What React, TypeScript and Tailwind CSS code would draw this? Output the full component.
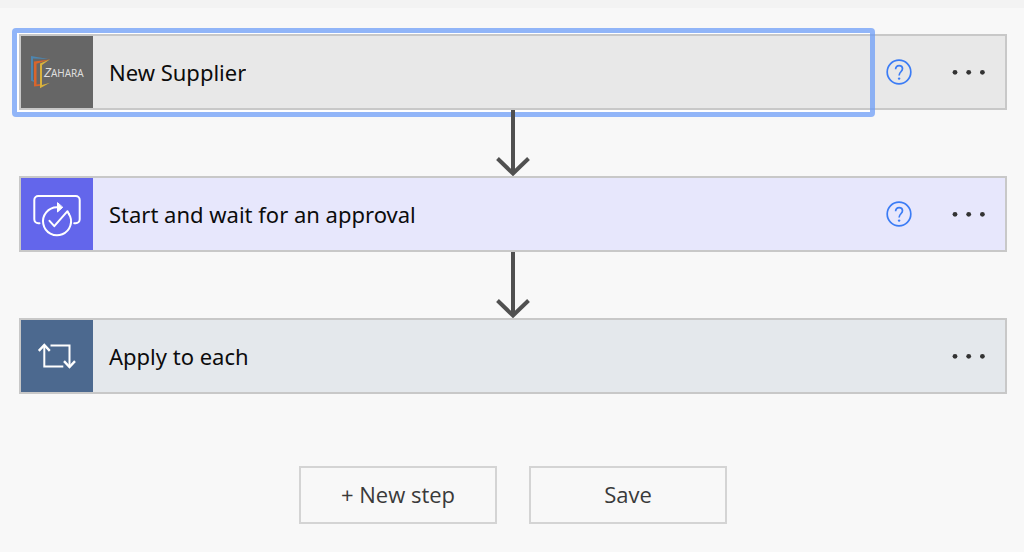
import type { ReactNode } from 'react'
import clsx from 'clsx'

type Step = {
  title: string
  icon: ReactNode
  card: string
  tile: string
  help?: boolean
  selected?: boolean
}

function ZaharaLogo() {
  return (
    <svg viewBox="0 0 72 72" className="w-full" fill="none" role="img" aria-label="Zahara">
      <path d="M10 20 27.5 23 12 22.5V44l2 .8v1.4l-4-1.4z" fill="#4d86b0" />
      <path d="m13 25.5 16-2-13.5 4.3V48.5l4-.5v1.8l-6.5.7z" fill="#d9652c" />
      <path d="m19 27.5 10-4.3-8 5.7v20l8-2.2-10 5.5z" fill="#d9b23c" />
      <text x="23" y="41" fill="#dedede" className="font-['Noto_Sans',sans-serif]">
        <tspan className="text-[13px] italic">Z</tspan>
        <tspan className="text-[10px]">AHARA</tspan>
      </text>
    </svg>
  )
}

function ApprovalIcon() {
  return (
    <svg viewBox="0 0 72 72" className="w-full" fill="none" stroke="#fff" strokeWidth="2" strokeLinecap="round" strokeLinejoin="round" aria-hidden="true">
      <path d="M18.5 45.3h-1.2a4 4 0 0 1-4-4V22a4 4 0 0 1 4-4h37.4a4 4 0 0 1 4 4v19.3a4 4 0 0 1-4 4h-1.5" />
      <path d="M36 29.3a14 14 0 1 0 11.8 6.4" />
      <path d="m28.5 42.8 4.8 5.4 13.2-15 1.5 3" />
      <path d="M36.5 25v9l5-4.5z" fill="#fff" strokeWidth="1" />
    </svg>
  )
}

function LoopIcon() {
  return (
    <svg viewBox="0 0 72 72" className="w-full" fill="none" stroke="#fff" strokeWidth="2" aria-hidden="true">
      <path d="M23.3 25.5v21h19" />
      <path d="m17.8 30.8 5.5-5.8 5.5 5.8" strokeWidth="2.4" />
      <path d="M29.5 25.5h19v21" />
      <path d="m43 41.2 5.5 5.8 5.5-5.8" strokeWidth="2.4" />
    </svg>
  )
}

const steps: Step[] = [
  { title: 'New Supplier', icon: <ZaharaLogo />, card: 'bg-[#e8e8e8]', tile: 'bg-[#666666]', help: true, selected: true },
  { title: 'Start and wait for an approval', icon: <ApprovalIcon />, card: 'bg-[#e7e7fc]', tile: 'bg-[#6366eb]', help: true },
  { title: 'Apply to each', icon: <LoopIcon />, card: 'bg-[#e4e8ec]', tile: 'bg-[#4c698f]' },
]

function Arrow() {
  return (
    <svg viewBox="0 0 34 66" className="relative z-10 h-[66px] w-[34px]" fill="none" stroke="#505050" aria-hidden="true">
      <path d="M17 0v63" strokeWidth="4" />
      <path d="M1.5 48.5 17 63.5l15.5-15" strokeWidth="4" />
    </svg>
  )
}

function StepCard({ title, icon, card, tile, help, selected }: Step) {
  return (
    <div className={clsx('flex h-[76px] w-full border-2 border-[#c8c8c8]', card)}>
      <button type="button" className="relative flex min-w-0 flex-1 items-center text-left">
        <span className={clsx('size-[72px] shrink-0', tile)}>{icon}</span>
        <span className="truncate pl-4 font-['Noto_Sans','DejaVu_Sans_Condensed',sans-serif] text-[22px] text-[#0c0c0c]">
          {title}
        </span>
        {/* selection ring sits just outside the card edge */}
        {selected && (
          <span className="absolute -top-[8px] -right-[5px] -bottom-[9px] -left-[9px] rounded border-[5px] border-[#6598f8]/70 shadow-[inset_2px_1px_0_#fff,inset_0_-2px_0_#fff]" />
        )}
      </button>
      <div className="flex w-[135px] shrink-0 items-center justify-end pr-4">
        {help && (
          <button type="button" aria-label={`Help for ${title}`} className="mr-[37px]">
            <svg viewBox="0 0 26 26" className="size-[26px]" fill="none" stroke="#3b7cf5" aria-hidden="true">
              <circle cx="13" cy="13" r="11.8" strokeWidth="1.7" />
              <path d="M9.6 10.2c0-2.2 1.4-3.6 3.5-3.6s3.4 1.3 3.4 3.2c0 2.8-3.4 3.2-3.4 6.6" strokeWidth="1.7" />
              <circle cx="13.1" cy="19.6" r="1.2" fill="#3b7cf5" stroke="none" />
            </svg>
          </button>
        )}
        <button type="button" aria-label={`More options for ${title}`}>
          <svg viewBox="0 0 40 10" className="h-[10px] w-[40px]" fill="#333" aria-hidden="true">
            <circle cx="6" cy="5.3" r="2.4" />
            <circle cx="19.7" cy="5.3" r="2.4" />
            <circle cx="33.4" cy="5.3" r="2.4" />
          </svg>
        </button>
      </div>
    </div>
  )
}

function FooterButton({ children }: { children: ReactNode }) {
  return (
    <button
      type="button"
      className="h-[58px] w-[198px] border-2 border-[#d4d4d4] bg-[#f8f8f8] pb-0.5 font-['Open_Sans','Noto_Sans',sans-serif] text-[22px] text-[#3a3a3a]"
    >
      {children}
    </button>
  )
}

export default function App() {
  return (
    <div className="min-h-screen bg-[#f8f8f8]">
      <div className="h-2 bg-[#f3f3f3]" />
      <main className="flex flex-col items-center pt-[26px] pr-[17px] pl-[19px]">
        {steps.map((step, i) => (
          <div key={step.title} className="flex w-full flex-col items-center">
            {i > 0 && <Arrow />}
            <StepCard {...step} />
          </div>
        ))}
        <div className="flex gap-8 pt-[72px]">
          <FooterButton>+ New step</FooterButton>
          <FooterButton>Save</FooterButton>
        </div>
      </main>
    </div>
  )
}
